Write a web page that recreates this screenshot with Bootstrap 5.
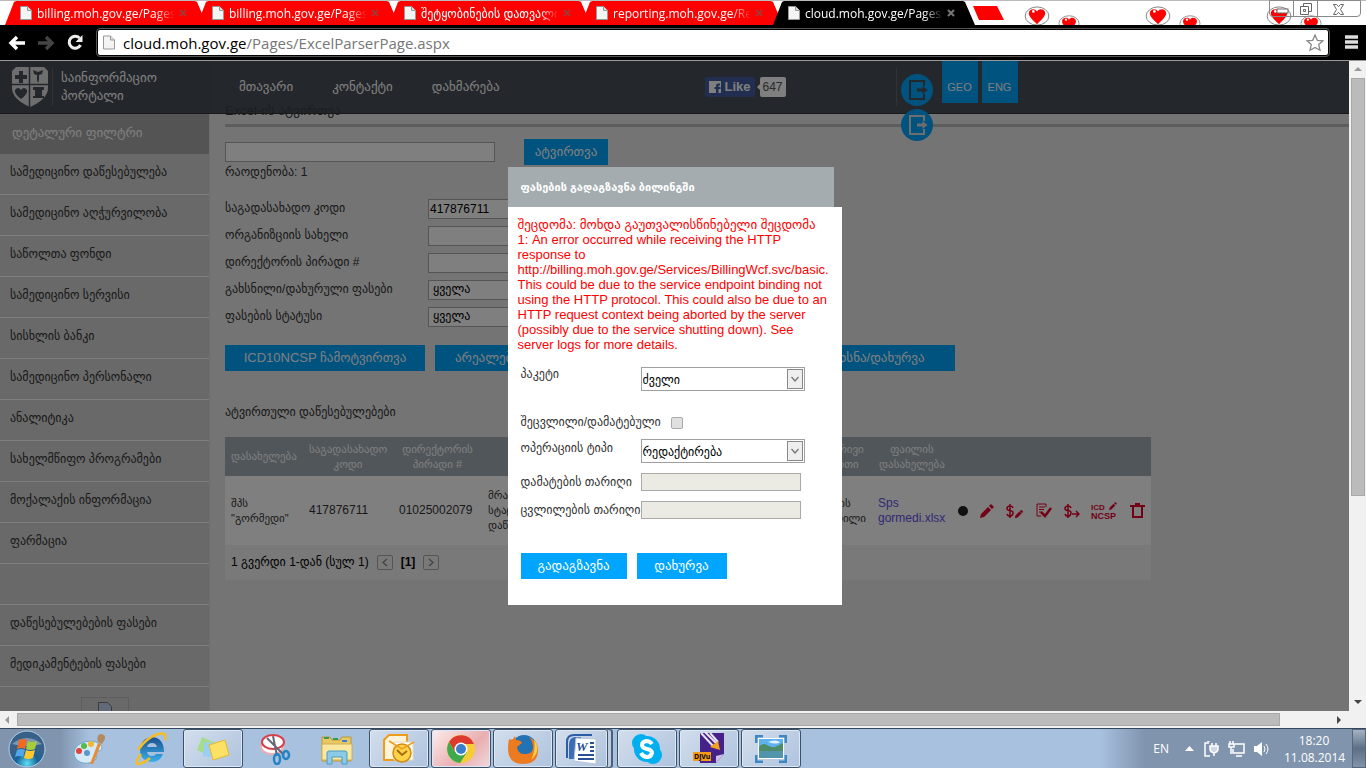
<!DOCTYPE html>
<html lang="ka">
<head>
<meta charset="utf-8">
<meta name="viewport" content="width=device-width, initial-scale=1">
<title>cloud.moh.gov.ge/Pages/ExcelParserPage.aspx</title>
<link rel="stylesheet" href="https://cdn.jsdelivr.net/npm/bootstrap@5.3.0/dist/css/bootstrap.min.css">
<style>
:root{--geo:"Liberation Sans","DejaVu Sans",sans-serif;--ui:"Open Sans","Noto Sans","DejaVu Sans",sans-serif}
body{font-family:var(--geo);font-size:12px;line-height:15px;color:#333;background:#fff}
a{text-decoration:none}
svg{display:block;flex:none}
input,select,button{border-radius:0;font-family:inherit}
/* browser frame */
.tabstrip{height:25px;background:#fff;font-family:var(--ui);font-size:12px;border-top:1px solid #bbb}
.tabs-row{padding-left:5px}
.btab{width:202px;height:24px;margin-right:-10px;padding:0 20px 0 15px;gap:5px;color:#fff;background:red;clip-path:polygon(9px 1px,11px 0,190px 0,192px 1px,202px 24px,0 24px)}
.btab:hover{color:#fff}
.btab.current{background:#000;z-index:2}
.btab-title{width:139px;overflow:hidden;white-space:nowrap;-webkit-mask-image:linear-gradient(90deg,#000 118px,transparent 138px);mask-image:linear-gradient(90deg,#000 118px,transparent 138px)}
.newtab{width:32px;height:14px;margin:5px 0 0 8px;border:0;background:red;clip-path:polygon(0 0,24px 0,31px 14px,6px 14px)}
.hearts{margin-left:18px}
.winbtns{position:absolute;right:5px;top:-1px;height:17px;border:1px solid #888;border-radius:0 0 4px 4px}
.winbtns button{background:none;border:0;border-right:1px solid #888;padding:0;width:24px}
.winbtns button:last-child{width:42px;border:0}
.omnibar{height:36px;background:#000;padding:0 8px;border-bottom:1px solid #999}
.omnibar button{background:none;border:0;padding:0}
.reload{margin:0 13px 0 11px}
.omnibox{height:27px;background:#fff;border:1px solid #000;outline:1px solid #555;border-radius:3px;padding:0 4px 0 5px}
.urltext{font:15px/24px var(--ui);color:#777}
/* site */
.siteview{position:relative;overflow:hidden;min-height:0}
.topbar{position:absolute;left:0;right:0;top:0;height:53px;background:rgba(54,62,70,.9);border-bottom:1px solid #333;font-size:13px;line-height:18px;z-index:2}
.topbar a{color:#fff}
.brand-box{width:239px;padding-left:12px}
.site-nav{gap:39px}
.vline{width:1px;height:38px;background:#666}
.fblike{background:#435da3;height:20px;width:50px;border:0;border-radius:2px;color:#fff;font-weight:bold;padding:0 4px;margin-left:205px}
.likecount{position:relative;background:#fff;border-radius:2px;height:20px;width:26px;margin-left:5px;text-align:center;color:#555;line-height:20px;font-size:12px}
.likecount::before{content:"";position:absolute;left:-3px;top:7px;border:solid transparent;border-width:3px 3px 3px 0;border-right-color:#fff}
.sep2{margin-left:110px;margin-right:45px}
.lang{width:36px;height:42px;background:#00a5ff;padding-top:17px;text-align:center;font-size:11px;margin-right:4px}
.exits{position:absolute;left:901px;top:13px;z-index:3;gap:3px}
.exit-top{color:#484f56}
.exit-low{color:#ddd}
.sidebar{width:210px;flex:none;background:#d2d2d2;padding-top:53px;border-right:1px solid #ddd}
.sidebar h2{height:40px;margin:0;padding-left:12px;background:#a8a8a8;color:#fff;font-size:13px;line-height:38px}
.sidebar li{height:41px;border-bottom:1px solid #fff}
.sidebar li a{display:block;padding-left:10px;line-height:36px;color:#333;font-size:12px}
.brokenimg{width:48px;height:30px;margin:10px auto 0 81px;border:1px solid #bbb}
.content-area{background:#e8e8e8;padding:39px 0 0 15px;min-width:0;color:#333}
.content-area h1{font-size:13px;line-height:21px;height:24px;margin:0}
.ruleline{height:3px;background:#bbb;margin-bottom:12px}
.fld{height:20px;border:1px solid #aaa;background:#fff;color:#000;padding:0 1px;font-size:12px;appearance:none}
select.fld{padding-left:4px}
.filefld{width:270px}
.upl{width:84px;margin-left:29px}
.bluebtn{height:26px;border:0;background:#00a5ff;color:#fff;font-size:13px;line-height:24px;padding:0;white-space:nowrap}
.filters{margin-top:15px}
.frow{height:27px}
.frow label{width:203px}
.frow .fld{width:160px}
.actions{margin-top:15px;gap:10px}
.b1{width:200px}
.b2{width:350px;text-align:left;padding-left:20px}
.b3{width:160px}
.tbl-title{margin-top:34px}
.grid-table{width:926px;table-layout:fixed;margin:17px 0 0;font-size:11px;line-height:15px;color:#333}
.c1{width:78px}.c2,.c6{width:90px}.c3{width:89px}.c4,.c5{width:150px}.c7{width:80px}.c8{width:199px}
.grid-table th{height:39px;background:#a0acb4;color:#fff;font-weight:normal;text-align:center;padding:0 6px;vertical-align:middle}
.grid-table td{height:69px;background:#fff;padding:0 6px;vertical-align:middle}
.grid-table .num{font-size:12px}
.grid-table a{color:#6450e8;font-size:12px}
.grid-table tfoot td{height:35px;background:#f3f3f3;color:#000;font-size:12px}
.acts{gap:12px}
.acts .dollar{margin-right:-1px}
.pgbtn{width:16px;height:15px;background:none;border:1px solid #aaa;border-radius:2px;padding:0 4px}
.shade{position:absolute;inset:0;background:rgba(0,0,0,.5);z-index:5}
.dlg{width:334px}
.dlg-head{width:326px;height:40px;background:#a4acb0;color:#fff;padding-left:13px;line-height:40px;font-weight:bold;font-size:11px;margin:0}
.dlg-body{background:#fff;padding:10px 10px 26px 13px;color:#333}
.errtext{color:red;font-size:13px;line-height:15px;margin:0 -8px 15px -3px;white-space:nowrap}
.dlg label{width:120px;white-space:nowrap}
.dsel{width:164px;height:24px;border:1px solid #a0a0a0;background:#fff url("data:image/svg+xml,%3Csvg xmlns='http://www.w3.org/2000/svg' width='16' height='20'%3E%3Crect x='.5' y='.5' width='15' height='19' fill='%23eee' stroke='%23888'/%3E%3Cpath d='M4.500 8l3.500 4 3.500-4' fill='none' stroke='%23777' stroke-width='1.300'/%3E%3C/svg%3E") no-repeat right 1px top 1px;appearance:none;padding:3px 1px 0;font-size:12px;color:#000}
.dinput{width:160px;height:18px;border:1px solid #aaa;background:#ebebe4}
.dcheck{width:12px;height:12px;margin:2px 0 0 30px;appearance:none;border:1px solid #aaa;border-radius:2px;background:#e0e0e0}
.pk{height:48px}
.ck{height:24px}
.op{height:29px}
.op label{padding-top:2px}
.dt1{height:28px}
.dbtns{gap:10px;margin-top:29px}
.s1{width:106px}
.s2{width:90px}
/* scrollbars */
.vscroll{width:17px;background:#f1f1f1;padding:0 1px 0 2px}
.vthumb{height:418px;background:#bbb;border:1px solid #a8a8a8}
.hscroll{height:17px;background:#f1f1f1}
.hthumb{width:1263px;height:13px;background:#bbb;border:1px solid #a8a8a8;margin-left:7px}
/* taskbar */
.taskbar{height:40px;background:linear-gradient(90deg,#8094ae 0,#8094ae 60px,#a7c1df 90px,#a7c1df 1100px,#8094ae 1145px);border-top:1px solid #33475c;font-family:var(--ui);color:#fff}
.taskbar button{width:60px;height:39px;padding:0;border:1px solid transparent;border-radius:3px;background:none;flex:none}
.taskbar button.open{border-color:#3f5166;box-shadow:inset 0 0 0 1px #dce8f5;background:linear-gradient(135deg,#d3deec,#aec3de)}
.taskbar button.lit{background:linear-gradient(135deg,#fdeeee,#e9aeb0 60%,#f0d9dd)}
.taskbar button.stacked{width:53px;margin-right:7px;box-shadow:inset 0 0 0 1px #dce8f5,4px 0 0 -1px #bccde2,5px 0 0 0 #4d6078}
.taskbar .start-btn{width:54px;margin-right:5px}
.taskbar svg{margin:auto}
.task-list{gap:2px}
.tray .tic{margin-left:9px}
.clock{width:60px;text-align:center;font-size:12px;line-height:17px;margin:0 8px 0 14px}
.taskbar .desk{width:14px;border:1px solid #55677d;border-radius:0;background:linear-gradient(#a5b2c2,#5d6f86 50%,#8393a8)}
</style>
</head>
<body class="vh-100 overflow-hidden d-flex flex-column">
<svg width="0" height="0" class="position-absolute" aria-hidden="true">
<defs>
<symbol id="page" viewBox="0 0 12 14"><path d="M.5.5h7l4 4v9H.5z" fill="#f4f4f4" stroke="#999"/><path d="M7.500.5v4h4" fill="#ddd" stroke="#999"/></symbol>
<symbol id="heart" viewBox="0 0 28 22"><ellipse cx="14" cy="11" rx="13" ry="10" fill="#fff" stroke="#777"/><path d="M14 20C9 15 5 12 5 8c0-5 7-6 9-2 2-4 9-3 9 2 0 4-4 7-9 12z" fill="red"/><circle cx="10" cy="6" r="1.500" fill="#fff"/></symbol>
<symbol id="exit" viewBox="0 0 32 32"><circle cx="16" cy="16" r="16" fill="#00a5ff"/><path d="M23 12V7H9v18h14v-5" fill="none" stroke="currentColor" stroke-width="2"/><path d="M16 14.500h5.500v-2.500l5 4-5 4v-2.500H16z" fill="currentColor"/></symbol>
<symbol id="pencil" viewBox="0 0 14 14"><path d="M0 14l1-4 7-7 3 3-7 7zM9 2l2-2 3 3-2 2z" fill="#e8002d"/></symbol>
</defs>
</svg>

<div class="tabstrip position-relative d-flex flex-shrink-0">
<nav class="tabs-row d-flex" aria-label="Tabs">
<a href="#" class="btab d-flex align-items-center"><svg width="12" height="14"><use href="#page"/></svg><span class="btab-title">billing.moh.gov.ge/Pages/</span><svg width="8" height="8"><path d="M1 1l6 6M7 1L1 7" stroke="#a33" stroke-width="2"/></svg></a>
<a href="#" class="btab d-flex align-items-center"><svg width="12" height="14"><use href="#page"/></svg><span class="btab-title">billing.moh.gov.ge/Pages/</span><svg width="8" height="8"><path d="M1 1l6 6M7 1L1 7" stroke="#a33" stroke-width="2"/></svg></a>
<a href="#" class="btab d-flex align-items-center"><svg width="12" height="14"><use href="#page"/></svg><span class="btab-title">შეტყობინების დათვალიერება</span><svg width="8" height="8"><path d="M1 1l6 6M7 1L1 7" stroke="#a33" stroke-width="2"/></svg></a>
<a href="#" class="btab d-flex align-items-center"><svg width="12" height="14"><use href="#page"/></svg><span class="btab-title">reporting.moh.gov.ge/Rep</span><svg width="8" height="8"><path d="M1 1l6 6M7 1L1 7" stroke="#a33" stroke-width="2"/></svg></a>
<a href="#" class="btab current d-flex align-items-center"><svg width="12" height="14"><use href="#page"/></svg><span class="btab-title">cloud.moh.gov.ge/Pages/</span><svg width="8" height="8"><path d="M1 1l6 6M7 1L1 7" stroke="#777" stroke-width="2"/></svg></a>
</nav>
<button class="newtab" aria-label="New tab"></button>
<svg class="hearts" width="310" height="24"><use href="#heart" x="0" y="5" width="28" height="20"/><use href="#heart" x="34" y="14" width="24" height="17"/><use href="#heart" x="121" y="5" width="28" height="20"/><use href="#heart" x="155" y="14" width="24" height="17"/><use href="#heart" x="242" y="5" width="28" height="20"/><use href="#heart" x="276" y="14" width="24" height="17"/></svg>
<div class="winbtns d-flex">
<button aria-label="Minimize"><svg width="24" height="15"><rect x="7" y="8" width="11" height="4" fill="#fff" stroke="#666"/></svg></button>
<button aria-label="Restore"><svg width="24" height="15" fill="#fff" stroke="#666"><path d="M9.500 2.500h8v8h-8z"/><path d="M6.500 5.500h8v8h-8zM9.500 8.500h2v2h-2z"/></svg></button>
<button aria-label="Close"><svg width="40" height="15"><path d="M15.500 3.500h3l2 2 2-2h3l-3 5 3 5h-3l-2-2-2 2h-3l3-5z" fill="#fff" stroke="#666"/></svg></button>
</div>
</div>

<div class="omnibar d-flex align-items-center flex-shrink-0">
<button aria-label="Back"><svg width="18" height="16"><path d="M9 2L3 8l6 6M3 8h14" fill="none" stroke="#fff" stroke-width="3.500"/></svg></button>
<button class="ms-2" aria-label="Forward"><svg width="22" height="16"><path d="M12 2l6 6-6 6M18 8H4" fill="none" stroke="#444" stroke-width="3.500"/></svg></button>
<button class="reload" aria-label="Reload"><svg width="17" height="17"><path d="M12.500 4A6 6 0 1 0 13.500 11" fill="none" stroke="#eee" stroke-width="3"/><path d="M15.500 1v7h-7z" fill="#eee"/></svg></button>
<div class="omnibox flex-grow-1 d-flex align-items-center">
<svg width="12" height="15" class="me-2"><use href="#page"/></svg>
<div class="urltext flex-grow-1"><span class="text-black">cloud.moh.gov.ge</span>/Pages/ExcelParserPage.aspx</div>
<svg width="18" height="18"><path d="M9 1l2.300 5.300 5.700.5-4.300 3.800 1.300 5.700L9 13.400l-5 2.900 1.300-5.700L1 6.800l5.700-.5z" fill="#fff" stroke="#888" stroke-width="1.300"/></svg>
</div>
<button class="ms-3" aria-label="Menu"><svg width="13" height="15"><path d="M0 2h13M0 7h13M0 12h13" stroke="#ddd" stroke-width="3.500"/></svg></button>
</div>

<div class="d-flex flex-grow-1 overflow-hidden">
<div class="siteview flex-grow-1 d-flex">
<header class="topbar d-flex align-items-center">
<a href="#" class="brand-box d-flex align-items-center">
<svg width="36" height="40" viewBox="0 0 36 40"><path d="M4 0h28l4 4v17q0 11-18 19Q0 32 0 21V4z" fill="#ddd"/><path d="M17.500 0v40M0 17.500h36" stroke="#484f56" stroke-width="1.500"/><g fill="#484f56"><path d="M7 4h4v4h4v4h-4v4H7v-4H3V8h4zM9 32q-7-5-6-9 3-4 6 0 3-4 6 0 1 4-6 9zM21 3l5 2 5-2-1 4-3 1v5l-1 3-1-3V8l-3-1zM21 20h11v3h-2v6h2v2H21v-2h2v-6h-2z"/></g></svg>
<span class="vline ms-1 me-2"></span><span>საინფორმაციო<br>პორტალი</span></a>
<nav class="d-flex site-nav" aria-label="Main"><a href="#">მთავარი</a><a href="#">კონტაქტი</a><a href="#">დახმარება</a></nav>
<button class="fblike d-flex align-items-center gap-1"><svg width="12" height="12"><path d="M0 0h12v12H9.500V8h2V6h-2V4.500H11v-2H9Q7 2.500 7 5v1H5.500v2H7v4H0z" fill="#fff"/></svg>Like</button>
<span class="likecount">647</span>
<span class="vline sep2"></span>
<a href="#" class="lang align-self-start">GEO</a><a href="#" class="lang align-self-start">ENG</a>
</header>
<div class="exits d-flex flex-column">
<a href="#" aria-label="Exit" class="exit-top"><svg width="32" height="32"><use href="#exit"/></svg></a>
<a href="#" aria-label="Log out" class="exit-low"><svg width="32" height="32"><use href="#exit"/></svg></a>
</div>

<aside class="sidebar">
<h2>დეტალური ფილტრი</h2>
<ul class="list-unstyled mb-0">
<li><a href="#">სამედიცინო დაწესებულება</a></li>
<li><a href="#">სამედიცინო აღჭურვილობა</a></li>
<li><a href="#">საწოლთა ფონდი</a></li>
<li><a href="#">სამედიცინო სერვისი</a></li>
<li><a href="#">სისხლის ბანკი</a></li>
<li><a href="#">სამედიცინო პერსონალი</a></li>
<li><a href="#">ანალიტიკა</a></li>
<li><a href="#">სახელმწიფო პროგრამები</a></li>
<li><a href="#">მოქალაქის ინფორმაცია</a></li>
<li><a href="#">ფარმაცია</a></li>
<li></li>
<li><a href="#">დაწესებულებების ფასები</a></li>
<li><a href="#">მედიკამენტების ფასები</a></li>
</ul>
<div class="brokenimg"><svg width="14" height="16" class="mx-auto mt-1"><path d="M.5.5h9l4 4v11H.5z" fill="#c5d5f5" stroke="#777"/><circle cx="7" cy="14" r="4" fill="#3a3"/></svg></div>
</aside>

<main class="content-area flex-grow-1">
<h1>Excel-ის ატვირთვა</h1>
<div class="ruleline"></div>
<div class="d-flex align-items-center"><input class="fld filefld" aria-label="ფაილი" type="text"><button class="bluebtn upl">ატვირთვა</button></div>
<div>რაოდენობა: 1</div>
<form class="filters">
<div class="frow d-flex align-items-center"><label for="f1">საგადასახადო კოდი</label><input id="f1" class="fld" value="417876711"></div>
<div class="frow d-flex align-items-center"><label for="f2">ორგანიზციის სახელი</label><input id="f2" class="fld"></div>
<div class="frow d-flex align-items-center"><label for="f3">დირექტორის პირადი #</label><input id="f3" class="fld"></div>
<div class="frow d-flex align-items-center"><label for="f4">გახსნილი/დახურული ფასები</label><select id="f4" class="fld"><option>ყველა</option></select></div>
<div class="frow d-flex align-items-center"><label for="f5">ფასების სტატუსი</label><select id="f5" class="fld"><option>ყველა</option></select></div>
</form>
<div class="d-flex actions"><button class="bluebtn b1">ICD10NCSP ჩამოტვირთვა</button><button class="bluebtn b2">არეალების ჩამოტვირთვა</button><button class="bluebtn b3">გახსნა/დახურვა</button></div>
<div class="tbl-title">ატვირთული დაწესებულებები</div>
<table class="grid-table">
<colgroup><col class="c1"><col class="c2"><col class="c3"><col class="c4"><col class="c5"><col class="c6"><col class="c7"><col class="c8"></colgroup>
<thead><tr><th>დასახელება</th><th>საგადასახადო კოდი</th><th>დირექტორის პირადი #</th><th>დაწესებულების<br>ტიპი</th><th>რეგიონი</th><th class="pe-0">ფაქტობრივი მისამართი</th><th>ფაილის დასახელება</th><th></th></tr></thead>
<tbody><tr><td>შპს "გორმედი"</td><td class="num">417876711</td><td class="num">01025002079</td><td>მრავალპროფილური<br>სტაციონარული<br>დაწესებულება</td><td>იმერეთი</td><td class="text-nowrap text-end"><span class="d-inline-block text-start">ქუთაისის<br>გაგზავნილი</span></td><td><a href="#">Sps gormedi.xlsx</a></td>
<td><div class="d-flex align-items-center acts">
<svg width="10" height="10"><circle cx="5" cy="5" r="5" fill="#222"/></svg>
<svg width="14" height="14"><use href="#pencil"/></svg>
<svg width="18" height="14" fill="none" stroke="#e8002d"><path d="M7 4Q6.500 2 4 2T1 4t3 2.500T7 9.500 4 12 1 10M4 0v14" stroke-width="1.500"/><use href="#pencil" x="9" y="6" width="8" height="8"/></svg>
<svg width="16" height="15" fill="none" stroke="#e8002d"><path d="M10 4V1H1v12h4M3 4h6M3 6.500h5M3 9h2"/><path d="M5 9l4 4 6-8" stroke-width="2.500"/></svg>
<svg class="dollar" width="16" height="14" fill="none" stroke="#e8002d" stroke-width="1.500"><path d="M7 4Q6.500 2 4 2T1 4t3 2.500T7 9.500 4 12 1 10M4 0v14M8 10h7M12 7l3 3-3 3"/></svg>
<svg width="27" height="18"><text x="0" y="8" font-size="8" font-weight="bold" fill="#e8002d">ICD</text><text x="0" y="17" font-size="9" font-weight="bold" fill="#e8002d">NCSP</text><use href="#pencil" x="18" y="0" width="8" height="8"/></svg>
<svg width="15" height="15" fill="none" stroke="#e8002d" stroke-width="2"><path d="M0 3h15M5 1h5M3 3v11h9V3"/></svg>
</div></td></tr></tbody>
<tfoot><tr><td colspan="8"><div class="d-flex align-items-center"><span>1 გვერდი 1-დან (სულ 1)</span><button class="pgbtn ms-2" aria-label="Previous"><svg width="6" height="9"><path d="M5 1L1 4.500 5 8" fill="none" stroke="#888" stroke-width="1.500"/></svg></button><b class="mx-2">[1]</b><button class="pgbtn" aria-label="Next"><svg width="6" height="9"><path d="M1 1l4 3.500L1 8" fill="none" stroke="#888" stroke-width="1.500"/></svg></button></div></td></tr></tfoot>
</table>
</main>

<div class="shade d-flex align-items-center justify-content-center">
<div class="dlg" role="dialog" aria-labelledby="dt">
<h2 class="dlg-head" id="dt">ფასების გადაგზავნა ბილინგში</h2>
<form class="dlg-body">
<p class="errtext">შეცდომა: მოხდა გაუთვალისწინებელი შეცდომა<br>1: An error occurred while receiving the HTTP<br>response to<br>http://billing.moh.gov.ge/Services/BillingWcf.svc/basic.<br>This could be due to the service endpoint binding not<br>using the HTTP protocol. This could also be due to an<br>HTTP request context being aborted by the server<br>(possibly due to the service shutting down). See<br>server logs for more details.</p>
<div class="d-flex pk"><label for="pk">პაკეტი</label><select id="pk" class="dsel"><option>ძველი</option></select></div>
<div class="d-flex ck"><label for="ck">შეცვლილი/დამატებული</label><input id="ck" type="checkbox" class="dcheck"></div>
<div class="d-flex op"><label for="op">ოპერაციის ტიპი</label><select id="op" class="dsel"><option>რედაქტირება</option></select></div>
<div class="d-flex align-items-center dt1"><label for="d1">დამატების თარიღი</label><input id="d1" class="dinput" disabled></div>
<div class="d-flex align-items-center dt1"><label for="d2">ცვლილების თარიღი</label><input id="d2" class="dinput" disabled></div>
<div class="d-flex dbtns"><button type="button" class="bluebtn s1">გადაგზავნა</button><button type="button" class="bluebtn s2">დახურვა</button></div>
</form>
</div>
</div>
</div>
<div class="vscroll d-flex flex-column justify-content-between">
<div><svg width="14" height="17"><path d="M3 10l4-4 4 4z" fill="#999"/></svg><div class="vthumb"></div></div>
<svg width="14" height="17"><path d="M3 6l4 4 4-4z" fill="#444"/></svg>
</div>
</div>
<div class="hscroll d-flex align-items-center flex-shrink-0"><svg width="10" height="10"><path d="M9 1v8L5 5z" fill="#999"/></svg><div class="hthumb"></div><svg class="ms-auto me-4" width="6" height="10"><path d="M1 1v8l4-4z" fill="#444"/></svg></div>

<footer class="taskbar d-flex align-items-center flex-shrink-0">
<button class="start-btn" aria-label="Start"><svg width="38" height="38" viewBox="0 0 38 38"><defs><radialGradient id="orb" cx=".5" cy=".9"><stop offset="0" stop-color="#5fe0f5"/><stop offset=".6" stop-color="#15639b"/><stop offset="1" stop-color="#38618a"/></radialGradient></defs><circle cx="19" cy="19" r="18" fill="url(#orb)" stroke="#b5cfe4"/><path d="M4 14Q19 2 34 14 19 18 4 14z" fill="#fff" opacity=".35"/><path d="M11 10q4-2 8 0l-2 9q-4-2-8 0z" fill="#ef6b23"/><path d="M20 11q4 2 9 0l-2 8q-5 2-9 0z" fill="#a5cd39"/><path d="M9 20q4-2 8 0l-2 7q-4-2-8 0z" fill="#52a7e8"/><path d="M18 20q4 2 9 0l-2 8q-5 2-9 0z" fill="#fdc92c"/></svg></button>
<div class="d-flex task-list">
<button aria-label="Paint"><svg width="32" height="32"><path d="M1 20C1 11 14 6 23 9c8 3 7 9 2 9-4 1-1 5-2 8C16 34 1 30 1 20z" fill="#d5eaf6" stroke="#6aa8cc"/><circle cx="6" cy="18" r="3" fill="#e0443c"/><circle cx="11" cy="13" r="3" fill="#57b947"/><circle cx="18" cy="11" r="3" fill="#f2b632"/><circle cx="14" cy="20" r="3" fill="#5a97cc"/><path d="M17 31l8-21 3 1-8 20z" fill="#e98b35"/><path d="M25 9q-2-6 2-8 6 0 5 5l-3 5z" fill="#b58a62"/></svg></button>
<button aria-label="Internet Explorer"><svg width="34" height="34"><defs><linearGradient id="ieg" x2="0" y2="1"><stop stop-color="#1d4f8c"/><stop offset="1" stop-color="#38b0ee"/></linearGradient></defs><path d="M30 20H13q1 4 5 4 3 0 4-2h7q-3 8-11 8-12-1-12-12Q7 6 18 5q12 1 12 15zM13 15h10q-1-4-5-4t-5 4z" fill="url(#ieg)" fill-rule="evenodd"/><path d="M7 22Q-2 35 8 31q5-2 8-5M4 18Q12 6 24 2q10-2 7 6" fill="none" stroke="#f3bd26" stroke-width="2.500"/></svg></button>
<button class="open" aria-label="Sticky Notes"><svg width="34" height="28"><path d="M6 2l14 6-6 13L1 15z" fill="#a8dc8d"/><path d="M9 7l14 2-2 14-14-2z" fill="#9bcef5"/><path d="M13 10l16-5 4 15-16 5z" fill="#fbe264" stroke="#e5b830"/></svg></button>
<button aria-label="Snipping Tool"><svg width="32" height="32"><ellipse cx="13" cy="14" rx="11" ry="7" fill="#fff" stroke="#e8b0b5" stroke-width="2"/><ellipse cx="14" cy="9" rx="11" ry="7" fill="#fff" stroke="#d8414a" stroke-width="2"/><path d="M8 5l17 17M14 3l4 20" stroke="#667" stroke-width="2"/><ellipse cx="18" cy="26" rx="3" ry="5" fill="none" stroke="#2583c4" stroke-width="2.500"/><ellipse cx="27" cy="22" rx="3" ry="4" fill="none" stroke="#2583c4" stroke-width="2.500"/></svg></button>
<button aria-label="Explorer"><svg width="34" height="32"><path d="M2 4h8l2 3h8l2-3h9v24H2z" fill="#e8c862" stroke="#b9963c"/><path d="M4 5h5M13 6h5" stroke="#3a9a50" stroke-width="2"/><path d="M22 8h5" stroke="#3c7fd0" stroke-width="2"/><path d="M2 11h30v16H2z" fill="#fbe8a0" stroke="#cfae55"/><path d="M7 31V20q0-2 2-2h16q2 0 2 2v11h-5v-7H12v7z" fill="#8ccbe8" stroke="#4b9cc4"/></svg></button>
<button class="open" aria-label="Outlook"><svg width="34" height="32"><path d="M7 2h18v25H2V7z" fill="#fff4da" stroke="#ee9c1c" stroke-width="2"/><path d="M12 9h19v18H12z" fill="#fff" stroke="#ddb"/><circle cx="20" cy="20" r="9" fill="#ffd34a" stroke="#d38b14" stroke-width="1.500"/><path d="M7 8l13 8 12-7" fill="none" stroke="#ee9c1c" stroke-width="1.500"/><path d="M15 17l5 5 5-4" fill="none" stroke="#a96c12" stroke-width="2"/></svg></button>
<button class="open lit" aria-label="Chrome"><svg width="30" height="30"><circle cx="15" cy="15" r="14" fill="#f7cc35"/><path d="M3 8a14 14 0 0 1 25 2H15l-6 8z" fill="#dc3a2e"/><path d="M3 8a14 14 0 0 0 11 21l7-11H9z" fill="#3faa4c"/><circle cx="15" cy="15" r="6.500" fill="#fff"/><circle cx="15" cy="15" r="5" fill="#3b7fcb"/></svg></button>
<button class="open" aria-label="Firefox"><svg width="32" height="32"><circle cx="17" cy="15" r="13" fill="#2272b4"/><path d="M2 6q2 1 4 0l2-3 1 4q5 0 6 3l-5 4q1 8 9 7 8-1 7-8-1-6-4-9 9 4 9 13 0 14-15 14Q2 31 1 17 1 10 2 6z" fill="#ec7a1f"/><path d="M27 6q8 12-3 21 5-9 3-21z" fill="#f8ce46"/></svg></button>
<button class="open stacked" aria-label="Word"><svg width="32" height="32"><path d="M1 25V9q0-7 7-7h18" fill="none" stroke="#2c5da8" stroke-width="2"/><path d="M3 26V11q0-6 6-7h6v22z" fill="#3c6cb4"/><path d="M10 5l20 1v25L8 28z" fill="#fff" stroke="#b9c6dc"/><text x="10" y="18" font-size="13" font-weight="bold" font-style="italic" font-family="Liberation Serif" fill="#294f97">W</text><path d="M24 10h4M24 14h4M24 18h4M12 22h16M12 26h16" stroke="#294f97" stroke-width="2"/></svg></button>
<button class="open" aria-label="Skype"><svg width="32" height="32"><circle cx="10" cy="10" r="9" fill="#00aff0"/><circle cx="22" cy="22" r="9" fill="#00aff0"/><circle cx="16" cy="16" r="13" fill="#00aff0"/><path d="M21 11q-2-3-6-3-4 1-4 4 0 3 5 4t5 4q-1 4-5 4-4 0-6-4" fill="none" stroke="#fff" stroke-width="4"/></svg></button>
<button class="open" aria-label="DjVu"><svg width="34" height="33"><path d="M8 1h24v21l-8 9H8z" fill="#47218a"/><path d="M24 31v-7l8-2z" fill="#cfc1e6"/><path d="M9 1l13 14M13 0l12 12M18 1l8 9" stroke="#e9e6f0" stroke-width="2"/><path d="M18 15l8-6 2 9z" fill="#f4a11c"/><path d="M1 20h18v9H1z" fill="#f59b17"/><text x="2" y="27" font-size="7" font-weight="bold" fill="#000">DjVu</text></svg></button>
<button class="open" aria-label="Photo Viewer"><svg width="32" height="28"><path d="M1 8V1h7M24 1h7v7M31 20v7h-7M8 27H1v-7" fill="none" stroke="#3d87c4" stroke-width="3"/><path d="M3 3h26v21H3z" fill="#fff"/><path d="M4 4h24v10H4z" fill="#5fb2ee"/><path d="M4 12q3-5 8-2t8 2l8-4v8H4z" fill="#4d8c68"/><path d="M4 16h24v7H4z" fill="#5194ab"/><path d="M13 7q7-3 12 0-3 3-12 0z" fill="#e5f4fc"/></svg></button>
</div>
<div class="tray d-flex align-items-center ms-auto">
<span class="me-3">EN</span>
<svg width="9" height="6"><path d="M0 5l4.500-5L9 5z" fill="#fff"/></svg>
<svg width="16" height="16" class="tic" fill="none" stroke="#fff" stroke-width="1.500"><path d="M6 2H2v13h5M4 0h3"/><path d="M7 5h8v3q0 3-4 4-4-1-4-4zM9 2v3M13 2v3M11 12v3" fill="#cfd8e3"/></svg>
<svg width="17" height="16" class="tic" fill="none" stroke="#fff" stroke-width="1.500"><path d="M6 3h10v9H5V8M8 15h6M2 0v3M5 0v3M1 3h5v3H1zM3 6v7"/></svg>
<svg width="16" height="16" class="tic"><path d="M0 5h3l5-4v14l-5-4H0z" fill="#fff"/><path d="M10 5q2 3 0 6M12 3q4 5 0 10" fill="none" stroke="#fff"/></svg>
<div class="clock">18:20<br>11.08.2014</div>
<button class="desk" aria-label="Show desktop"></button>
</div>
</footer>
<script src="https://cdn.jsdelivr.net/npm/bootstrap@5.3.0/dist/js/bootstrap.bundle.min.js"></script>
</body>
</html>
